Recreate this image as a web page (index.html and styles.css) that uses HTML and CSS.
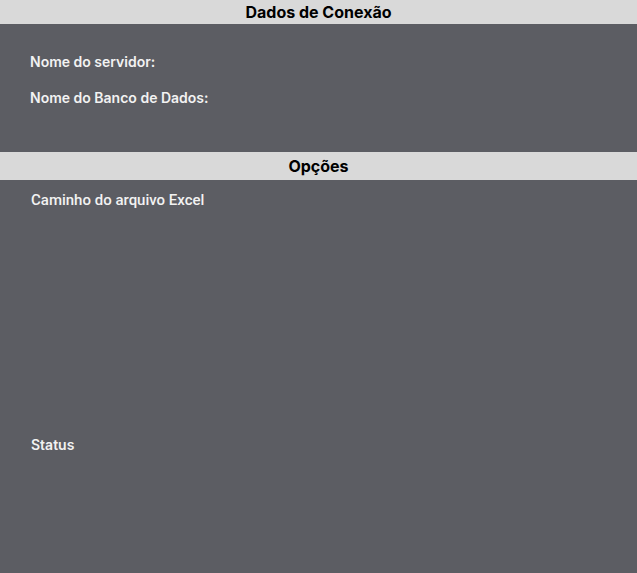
FILE: index.html
```html
<!DOCTYPE html>
<html lang="pt">
<head>
  <meta charset="UTF-8">
  <title>Dados de Conexão</title>
  <link rel="stylesheet" href="styles.css">
</head>
<body>
  <div class="section-title">Dados de Conexão</div>
  <div class="panel connection">
    <label class="field-label">Nome do servidor:</label>
    <label class="field-label">Nome do Banco de Dados:</label>
  </div>

  <div class="section-title options-title">Opções</div>
  <div class="panel options">
    <label class="path-label">Caminho do arquivo Excel</label>
    <label class="field-label status-label">Status</label>
  </div>
</body>
</html>
```

FILE: styles.css
```css
html, body {
  margin: 0;
  height: 100%;
}
body {
  background: #5c5d63;
  color: #f2f2f2;
  font-family: Inter, "Liberation Sans", sans-serif;
}
.section-title {
  height: 24px;
  line-height: 24px;
  background: #d9d9d9;
  color: #000;
  text-align: center;
  font-weight: 700;
  font-size: 16px;
}
.options-title {
  height: 28px;
  line-height: 28px;
}
.panel {
  display: flex;
  flex-direction: column;
}
.connection {
  height: 128px;
  box-sizing: border-box;
  padding: 30px 30px 0;
  gap: 20px;
}
.field-label {
  font-size: 14px;
  font-weight: 600;
  line-height: 16px;
}
.options {
  padding: 12px 31px 0;
}
.path-label {
  font-family: Roboto, "Liberation Sans", sans-serif;
  font-weight: 500;
  font-size: 15px;
  line-height: 16px;
}
.status-label {
  margin-top: 229px;
}
```
